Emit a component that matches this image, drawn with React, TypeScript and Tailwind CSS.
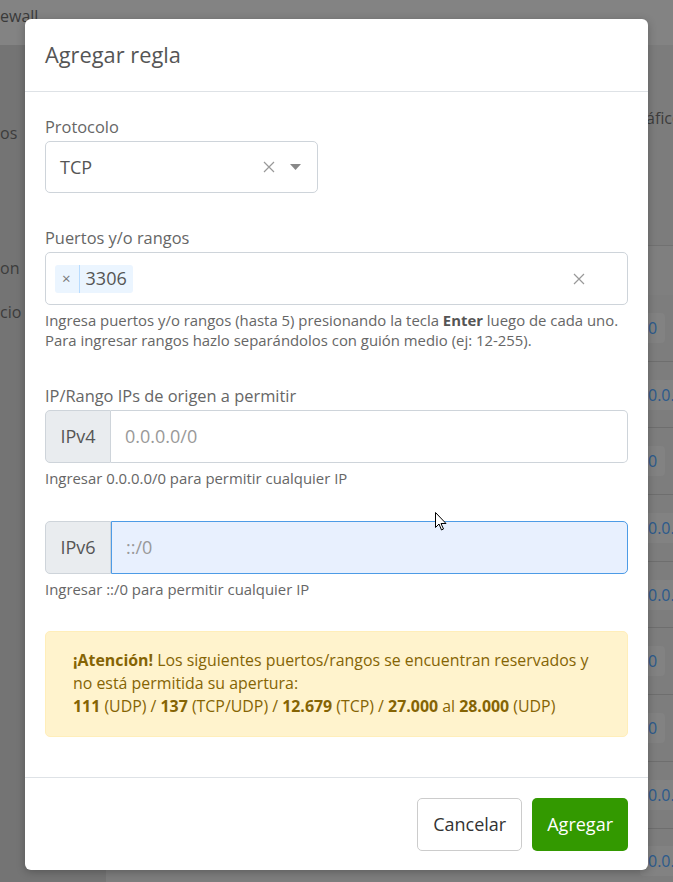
import { ReactNode } from 'react'

const font = { fontFamily: '"Open Sans", "Liberation Sans", sans-serif' }

// only what shows beside the modal
const rowMarks = ['0', '0.0.', '0', '0.0.', '0.0.', '0', '0', '0.0.', '0.0.']

function Backdrop() {
  return (
    <div className="absolute inset-0 flex flex-col bg-[#7c7c7c] text-[16px]">
      <div className="h-[45px] shrink-0 bg-[#838383] pt-[4px] leading-6 text-[#3a3a3a]">
        <span>ewall</span>
      </div>
      <div className="flex flex-1">
        <div className="w-[106px] shrink-0 bg-[#747474] text-[#3c3c3c]">
          <div className="mt-[76px]">os</div>
          <div className="mt-[111px]">on</div>
          <div className="mt-[20px]">cio</div>
        </div>
        <div className="flex flex-1 flex-col">
          <div className="mt-[61px] pl-[540px] text-[#3c3c3c]">áfico</div>
          <div className="mt-[115px] h-[50px] border-t border-[#717171] bg-[#7f7f7f]" />
          <div className="flex-1 bg-[#7d7d7d] pl-[534px]">
            {rowMarks.map((m, i) => (
              <div key={i} className="flex h-[66.7px] items-center border-b border-[#6e6e6e]">
                <span className="rounded bg-[#828282] px-2 py-[3px] text-[#2c5a8c]">{m}</span>
              </div>
            ))}
          </div>
        </div>
      </div>
    </div>
  )
}

function Label({ children }: { children: ReactNode }) {
  return <div className="mb-[2px] text-[16.4px] leading-6 text-[#666]">{children}</div>
}

function Help({ children }: { children: ReactNode }) {
  return <p className="mt-[5px] text-[14.9px] leading-5 text-[#666]">{children}</p>
}

function XIcon({ size = 12, color = '#999' }: { size?: number; color?: string }) {
  return (
    <svg width={size} height={size} viewBox="0 0 12 12" fill="none" stroke={color} strokeWidth="1.2">
      <path d="M1 1l10 10M11 1L1 11" />
    </svg>
  )
}

function IpGroup({ addon, value, focused }: { addon: string; value: string; focused?: boolean }) {
  return (
    <div className="flex h-[53px]">
      <div className="flex w-[66px] items-center justify-center rounded-l-[5px] border border-[#ced4da] bg-[#e9ecef] text-[18px] text-[#555]">
        {addon}
      </div>
      <div
        className={
          focused
            ? 'flex flex-1 items-center rounded-r-[5px] border border-[#4d9be6] bg-[#e8f0fe] pl-[14px] text-[18px] text-[#999]'
            : 'flex flex-1 items-center rounded-r-[5px] border border-l-0 border-[#ced4da] bg-white pl-[14px] text-[18px] text-[#999]'
        }
      >
        {value}
      </div>
    </div>
  )
}

export default function App() {
  return (
    <div className="relative h-[882px] w-[673px] overflow-hidden" style={font}>
      <Backdrop />

      <div className="absolute left-[25px] top-[19px] w-[623px] rounded-[6px] bg-white shadow-[0_2px_8px_rgba(0,0,0,0.25)]">
        <header className="flex h-[73px] items-center border-b border-[#dee2e6] px-5">
          <h2 className="text-[21.8px] text-[#555]">Agregar regla</h2>
        </header>

        <div className="px-5 pt-[23px] pb-[40px]">
          <Label>Protocolo</Label>
          <div className="flex h-[52px] w-[273px] items-center rounded-[5px] border border-[#ced4da] pl-[14px] pr-[16px]">
            <span className="flex-1 text-[18px] text-[#555]">TCP</span>
            <XIcon />
            <svg className="ml-[15px]" width="11" height="6" viewBox="0 0 11 6">
              <path d="M0 0h11L5.5 6z" fill="#888" />
            </svg>
          </div>

          <div className="mt-[33px]">
            <Label>Puertos y/o rangos</Label>
            <div className="flex h-[53px] items-center rounded-[5px] border border-[#ced4da] pl-[9px] pr-[42px]">
              <div className="flex h-[28px] flex-1 items-center">
                <span className="flex h-full items-center rounded-[3px] bg-[#ebf5ff] text-[18px] text-[#555]">
                  <span className="flex h-full items-center border-r border-[#b8dcff] pl-[7px] pr-[8px] text-[15px] text-[#777]">×</span>
                  <span className="pl-[6px] pr-[6px]">3306</span>
                </span>
              </div>
              <XIcon />
            </div>
            <Help>
              Ingresa puertos y/o rangos (hasta 5) presionando la tecla <b className="font-bold text-[#555]">Enter</b> luego de cada uno.
              <br />
              Para ingresar rangos hazlo separándolos con guión medio (ej: 12-255).
            </Help>
          </div>

          <div className="mt-[34px]">
            <Label>IP/Rango IPs de origen a permitir</Label>
            <div className="mt-[1px]">
              <IpGroup addon="IPv4" value="0.0.0.0/0" />
            </div>
            <Help>Ingresar 0.0.0.0/0 para permitir cualquier IP</Help>
          </div>

          <div className="mt-[33px]">
            <IpGroup addon="IPv6" value="::/0" focused />
            <Help>Ingresar ::/0 para permitir cualquier IP</Help>
          </div>

          <div className="mt-[32px] rounded-[5px] border border-[#ffeeba] bg-[#fff3cd] px-[27px] pt-[17px] pb-[18px] text-[15.9px] leading-[23px] text-[#856404]">
            <b className="font-bold">¡Atención!</b> Los siguientes puertos/rangos se encuentran reservados y
            <br />
            no está permitida su apertura:
            <br />
            <b className="font-bold">111</b> (UDP) / <b className="font-bold">137</b> (TCP/UDP) / <b className="font-bold">12.679</b> (TCP) /{' '}
            <b className="font-bold">27.000</b> al <b className="font-bold">28.000</b> (UDP)
          </div>
        </div>

        <footer className="flex justify-end gap-[10px] border-t border-[#dee2e6] px-5 pt-5 pb-[19px]">
          <button className="h-[53px] rounded-[5px] border border-[#ccc] bg-white px-[15px] text-[18px] text-[#333]">Cancelar</button>
          <button className="h-[53px] rounded-[5px] bg-[#339900] px-[15px] text-[18px] text-white">Agregar</button>
        </footer>
      </div>

      <svg className="absolute left-[435px] top-[512px]" width="12" height="19" viewBox="0 0 12 19">
        <path d="M0.5 0.5v15l3.5-3.5 2.5 6 2-1-2.5-5.5h5z" fill="white" stroke="black" strokeWidth="1" />
      </svg>
    </div>
  )
}
